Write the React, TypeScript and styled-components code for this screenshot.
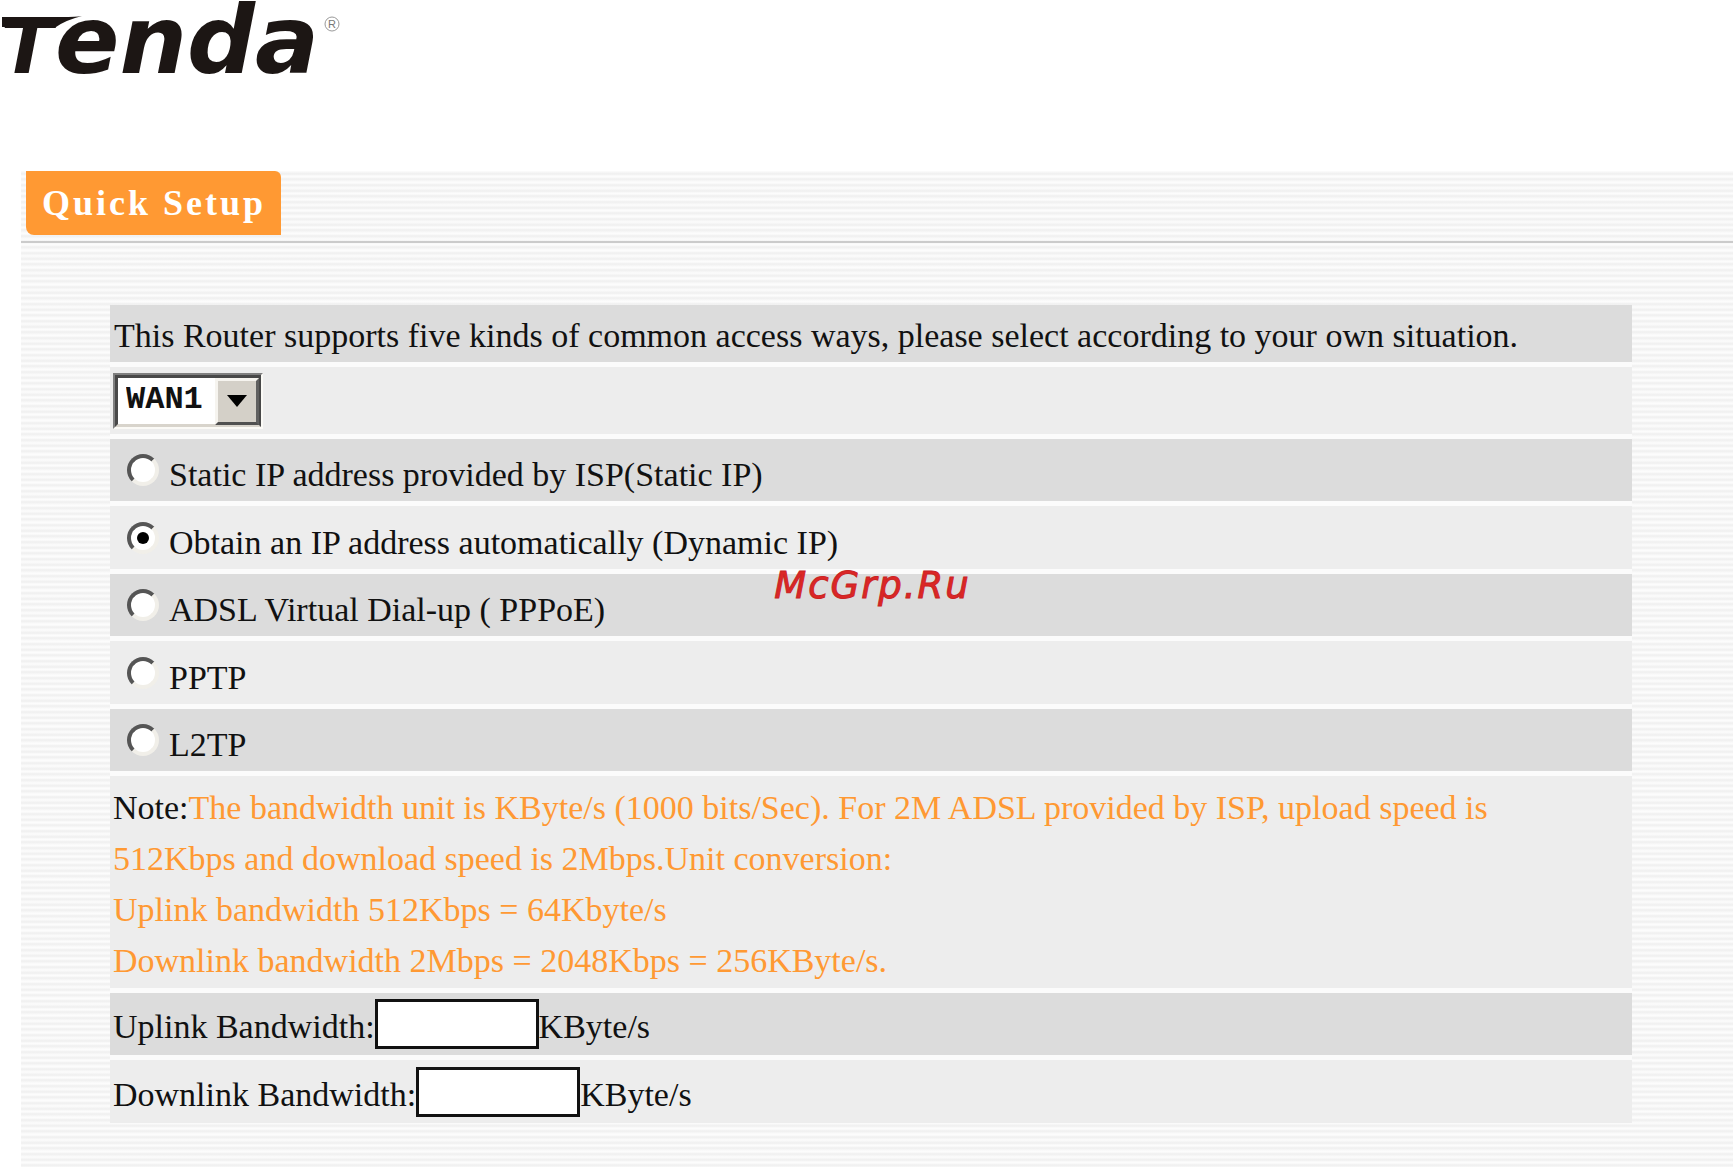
import React, { useState } from "react";
import styled, { createGlobalStyle } from "styled-components";

const GlobalStyle = createGlobalStyle`
  *, *::before, *::after { box-sizing: border-box; }
  body {
    margin: 0;
    background: #fff;
    color: #111;
    font-family: "Liberation Serif", "Times New Roman", serif;
    font-size: 34px;
  }
`;

const Page = styled.div`
  position: relative;
  display: flex;
  flex-direction: column;
  min-height: 100vh;
`;

const Header = styled.header`
  height: 171px;
`;

const Logo = styled.svg`
  display: block;
  width: 345px;
  height: 80px;
  overflow: visible;
`;

const Panel = styled.main`
  flex: 1;
  margin-left: 21px;
  padding-bottom: 43px;
  background: repeating-linear-gradient(
    #fcfcfc 0px, #efefef 3px, #fcfcfc 5px,
    #fcfcfc 6px, #efefef 8px, #fcfcfc 11px,
    #fcfcfc 12px, #efefef 14px, #fcfcfc 17px
  );
`;

const TitleBar = styled.div`
  height: 72px;
  padding-left: 5px;
  border-bottom: 2px solid #cbcbcb;
`;

const Title = styled.h1`
  display: inline-block;
  margin: 0;
  padding: 1px 15px 0 16px;
  border-radius: 0 6px 0 8px;
  background: #ff9933;
  color: #fff;
  font-size: 36px;
  font-weight: bold;
  line-height: 63px;
  letter-spacing: 3px;
`;

const Form = styled.form`
  display: flex;
  flex-direction: column;
  gap: 5px;
  margin: 62px 101px 0 89px;
  background: #fbfbfb;
`;

const Row = styled.div<{ $dark?: boolean }>`
  display: flex;
  align-items: center;
  min-height: ${(p) => (p.$dark ? 62 : 63)}px;
  padding: 0 3px;
  background: ${(p) => (p.$dark ? "#dcdcdc" : "#ededed")};
`;

const Intro = styled.p`
  margin: 0;
  padding: 5px 4px 0;
  background: #dcdcdc;
  line-height: 52px;
`;

const SelectRow = styled(Row)`
  min-height: 67px;
`;

const SelectFrame = styled.label`
  position: relative;
  display: block;
  width: 150px;
  height: 56px;
  border: 2px solid;
  border-color: #808080 #fbfaf6 #fbfaf6 #808080;
`;

const Select = styled.select`
  appearance: none;
  width: 100%;
  height: 100%;
  padding: 0 0 2px 8px;
  border: 3px solid;
  border-color: #484848 #484848 #d8d4cc #484848;
  border-radius: 0;
  background: #fff;
  color: #111;
  font-family: "Liberation Mono", "Courier New", monospace;
  font-size: 32px;
  font-weight: bold;
`;

const DropButton = styled.span`
  position: absolute;
  top: 3px;
  right: 2px;
  bottom: 2px;
  display: flex;
  align-items: center;
  justify-content: center;
  width: 44px;
  border: 3px solid;
  border-color: #f6f4ef #606060 #505050 #f6f4ef;
  background: #d4d0c8;
  pointer-events: none;
`;

const Option = styled.label`
  display: flex;
  align-items: center;
  gap: 10px;
  padding-left: 14px;
`;

const OptionText = styled.span`
  padding-top: 10px;
  white-space: pre;
`;

const Radio = styled.input`
  appearance: none;
  display: grid;
  place-items: center;
  width: 32px;
  height: 32px;
  margin: 0;
  border: 4px solid;
  border-color: #555 #f1efe9 #f1efe9 #555;
  border-radius: 50%;
  background: #fff;

  &:checked::before {
    content: "";
    width: 12px;
    height: 12px;
    border-radius: 50%;
    background: #000;
  }
`;

const Note = styled.p`
  margin: 0;
  padding: 6px 100px 2px 3px;
  background: #ededed;
  line-height: 51px;
`;

const NoteText = styled.span`
  color: #ff9933;
`;

const FieldLabel = styled.label`
  padding-top: 6px;
`;

const TextBox = styled.input`
  width: 164px;
  height: 50px;
  padding: 0 6px;
  border: 3px solid #111;
  border-radius: 0;
  background: #fff;
  font: inherit;
`;

const Watermark = styled.div`
  position: absolute;
  top: 50%;
  left: 50%;
  transform: translate(-50%, -50%);
  padding: 3px 0 0 12px;
  color: #dc2626;
  font-family: "DejaVu Sans", sans-serif;
  font-size: 37px;
  font-style: italic;
  line-height: 42px;
  letter-spacing: 2px;
  -webkit-text-stroke: 1px #c92424;
  pointer-events: none;
`;

const accessTypes = [
  { id: "static", label: "Static IP address provided by ISP(Static IP)" },
  { id: "dynamic", label: "Obtain an IP address automatically (Dynamic IP)" },
  { id: "pppoe", label: "ADSL Virtual Dial-up ( PPPoE)" },
  { id: "pptp", label: "PPTP" },
  { id: "l2tp", label: "L2TP" },
];

function TendaLogo() {
  return (
    <Logo viewBox="0 0 345 80" role="img" aria-label="Tenda">
      <g fill="#1c1614" fontFamily="DejaVu Sans" fontWeight="bold" fontStyle="italic">
        <path d="M2 17 H62 Q76 17 82 16 Q66 20 56 27 H2 Z" />
        <text x="1" y="73" fontSize="76">T</text>
        <text x="55" y="73" fontSize="95">enda</text>
      </g>
      <circle cx="332" cy="24" r="7" fill="none" stroke="#999" />
      <text x="328" y="28" fill="#777" fontFamily="Liberation Sans" fontSize="11">R</text>
    </Logo>
  );
}

export default function App() {
  const [access, setAccess] = useState("dynamic");

  return (
    <Page>
      <GlobalStyle />
      <Header>
        <TendaLogo />
      </Header>
      <Panel>
        <TitleBar>
          <Title>Quick Setup</Title>
        </TitleBar>
        <Form>
          <Intro>
            This Router supports five kinds of common access ways, please select according to your own situation.
          </Intro>
          <SelectRow>
            <SelectFrame>
              <Select aria-label="WAN port" defaultValue="WAN1">
                <option>WAN1</option>
                <option>WAN2</option>
              </Select>
              <DropButton>
                <svg width="20" height="12" viewBox="0 0 20 12">
                  <path d="M0 0H20L10 12Z" />
                </svg>
              </DropButton>
            </SelectFrame>
          </SelectRow>
          {accessTypes.map((type, i) => (
            <Row key={type.id} $dark={i % 2 === 0}>
              <Option>
                <Radio
                  type="radio"
                  name="access"
                  checked={access === type.id}
                  onChange={() => setAccess(type.id)}
                />
                <OptionText>{type.label}</OptionText>
              </Option>
            </Row>
          ))}
          <Note>
            Note:
            <NoteText>
              The bandwidth unit is KByte/s (1000 bits/Sec). For 2M ADSL provided by ISP, upload speed is 512Kbps and
              download speed is 2Mbps.Unit conversion:
              <br />
              Uplink bandwidth 512Kbps = 64Kbyte/s
              <br />
              Downlink bandwidth 2Mbps = 2048Kbps = 256KByte/s.
            </NoteText>
          </Note>
          <Row $dark>
            <FieldLabel htmlFor="uplink">Uplink Bandwidth:</FieldLabel>
            <TextBox id="uplink" type="text" />
            <FieldLabel as="span">KByte/s</FieldLabel>
          </Row>
          <Row>
            <FieldLabel htmlFor="downlink">Downlink Bandwidth:</FieldLabel>
            <TextBox id="downlink" type="text" />
            <FieldLabel as="span">KByte/s</FieldLabel>
          </Row>
        </Form>
      </Panel>
      <Watermark>McGrp.Ru</Watermark>
    </Page>
  );
}
